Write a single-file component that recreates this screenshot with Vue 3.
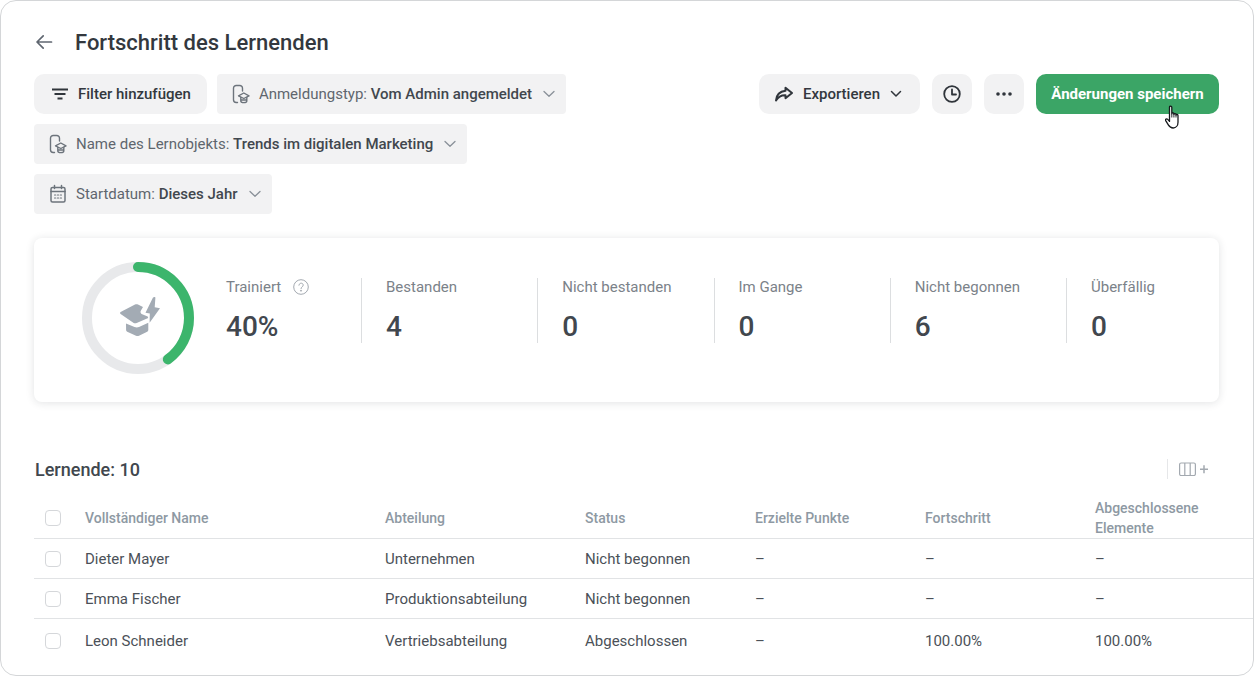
<template>
  <div class="page">
    <header class="title-row">
      <svg class="back" width="20" height="20" viewBox="0 0 20 20" fill="none" stroke="#5f6670" stroke-width="1.7" stroke-linecap="round" stroke-linejoin="round">
        <path d="M17.5 10H3.2M9.2 3.8 3 10l6.2 6.2" />
      </svg>
      <h1>Fortschritt des Lernenden</h1>
    </header>

    <section class="toolbar">
      <div class="filters">
        <button class="btn round">
          <svg width="16" height="12" viewBox="0 0 16 12" fill="none" stroke="#30353b" stroke-width="2">
            <path d="M0 1.5h16M2.5 6h11M5.5 10.5h5" />
          </svg>
          <span class="strong">Filter hinzufügen</span>
        </button>
        <button v-for="chip in chips" :key="chip.label" class="btn chip">
          <svg v-if="chip.icon === 'cap'" width="18" height="20" viewBox="0 0 18 20" fill="none" stroke="#6d747c" stroke-width="1.4" stroke-linecap="round" stroke-linejoin="round">
            <path d="M5.500 18.500H4.200A2.700 2.700 0 0 1 1.500 15.800V4.200A2.700 2.700 0 0 1 4.200 1.500h3.600a2.700 2.700 0 0 1 2.700 2.700V7" />
            <path d="M6.500 11.800 11.800 9l5.200 2.800-5.200 2.700z" />
            <path d="M8.800 13.500v3.400c0 1 1.300 1.700 3 1.700s3-.7 3-1.700v-3.400M8.800 16h6" />
          </svg>
          <svg v-else width="18" height="20" viewBox="0 0 18 20" fill="none" stroke="#6d747c" stroke-width="1.500" stroke-linecap="round">
            <rect x="2" y="3.500" width="14" height="14.500" rx="1.500" />
            <path d="M2 7.500h14M5.500 1.500v3M12.500 1.500v3" />
            <path d="M5.500 11h1.200M8.400 11h1.200M11.300 11h1.200M5.500 14h1.200M8.400 14h1.200M11.300 14h1.200" stroke-width="1.200" />
          </svg>
          <span class="chip-text">{{ chip.label }}: <b>{{ chip.value }}</b></span>
          <svg class="chev" width="12" height="8" viewBox="0 0 12 8" fill="none" stroke="#8a9199" stroke-width="1.300" stroke-linecap="round" stroke-linejoin="round">
            <path d="M1 1.500 6 6.300l5-4.800" />
          </svg>
        </button>
      </div>

      <div class="actions">
        <button class="btn round export">
          <svg width="18" height="16" viewBox="0 0 18 16" fill="none" stroke="#30353b" stroke-width="2" stroke-linejoin="round">
            <path d="M10.500 1.800 17 7l-6.500 5.200V9.200C6 9 3.300 10.600 1 14.500c.4-5.500 3.800-9 9.500-9.700z" />
          </svg>
          <span class="strong">Exportieren</span>
          <svg width="12" height="8" viewBox="0 0 12 8" fill="none" stroke="#30353b" stroke-width="1.500" stroke-linecap="round" stroke-linejoin="round">
            <path d="M1.500 1.500 6 6l4.500-4.500" />
          </svg>
        </button>
        <button class="btn round square">
          <svg width="18" height="18" viewBox="0 0 18 18" fill="none" stroke="#30353b" stroke-width="1.800" stroke-linecap="round" stroke-linejoin="round">
            <circle cx="9" cy="9" r="7.800" />
            <path d="M9 4.500V9.500H13" />
          </svg>
        </button>
        <button class="btn round square">
          <svg width="16" height="4" viewBox="0 0 16 4" fill="#30353b">
            <circle cx="2" cy="2" r="1.800" /><circle cx="8" cy="2" r="1.800" /><circle cx="14" cy="2" r="1.800" />
          </svg>
        </button>
        <button class="btn round save">
          Änderungen speichern
          <svg class="hand" width="18" height="25" viewBox="0 0 18 25" fill="#fff" stroke="#16191c" stroke-width="1.300" stroke-linejoin="round">
            <path d="M4.500 2.200c0-1.500 2.300-1.500 2.300 0v6.600c.1-1.200 2-1.200 2.100 0v.6c.1-1.100 2-1.100 2.100 0v.8c.2-1 2-.9 2 .2v6.800c0 3-1.800 5.800-4.800 5.800-2.400 0-3.600-.9-4.700-2.800L.7 15.600c-.7-1.300 1-2.300 2-1.200l1.800 2z" />
            <path d="M6.800 9v3.500M8.900 9.400v3.100M11 10.200v2.300" fill="none" stroke-width=".9" />
          </svg>
        </button>
      </div>
    </section>

    <section class="stats">
      <svg class="ring" width="112" height="112" viewBox="0 0 112 112" fill="none">
        <circle cx="56" cy="56" r="51" stroke="#e8e9eb" stroke-width="10" />
        <circle cx="56" cy="56" r="51" stroke="#3cb56c" stroke-width="10" stroke-linecap="round" :stroke-dasharray="ringDash" transform="rotate(-90 56 56)" />
        <path d="M38.600 50 53 42.500c1-.5 2-.5 3 0l5 2.500-2.200 3.700c-.8 1.400 0 3 1.400 3.500l5.500 2.300.5 1.500-11.500 5c-1 .4-2 .4-3 0L38.600 52c-.7-.4-.7-1.600 0-2z" fill="#a3abb4" />
        <path d="M44 61.500 52.500 65c1.500.6 3 .6 4.500 0l9.300-4.300v7.300c0 .8-.4 1.400-1.100 1.700l-8.200 4c-1 .5-2 .5-3 0l-8.800-4c-.7-.3-1.100-.9-1.100-1.700z" fill="#a3abb4" />
        <path d="M71 35.500 63.500 50.700l4.300.7-.2 9.300L78 46.300l-5.300-1 .7-9.500c0-.7-.4-1-.9-.8z" fill="#a3abb4" />
      </svg>

      <div class="stat first">
        <div class="stat-label">Trainiert
          <svg class="help" width="16" height="16" viewBox="0 0 16 16" fill="none" stroke="#a3a9b0" stroke-width="1">
            <circle cx="8" cy="8" r="7.300" />
            <path d="M5.900 6.200c.1-2.700 4.300-2.700 4.300-.1 0 1.800-2.200 1.700-2.200 3.500" stroke-linecap="round" />
            <circle cx="8" cy="11.700" r=".5" fill="#a3a9b0" />
          </svg>
        </div>
        <div class="stat-value">40%</div>
      </div>
      <div v-for="stat in stats" :key="stat.label" class="stat">
        <div class="stat-label">{{ stat.label }}</div>
        <div class="stat-value">{{ stat.value }}</div>
      </div>
    </section>

    <div class="table-title">
      <h2>Lernende: 10</h2>
      <div class="columns-btn">
        <svg width="30" height="14" viewBox="0 0 30 14" fill="none" stroke="#a3a9b0" stroke-width="1.200">
          <rect x=".6" y="1" width="15.800" height="12.500" rx="1.500" />
          <path d="M5.800 1v12.500M11.200 1v12.500" />
          <path d="M21 7.200h8M25 3.200v8" stroke-width="1.500" />
        </svg>
      </div>
    </div>

    <div class="table">
      <div class="row head">
        <span class="check"></span>
        <span v-for="col in columns" :key="col">{{ col }}</span>
      </div>
      <div v-for="row in rows" :key="row.name" class="row">
        <span class="check"></span>
        <span>{{ row.name }}</span>
        <span>{{ row.dept }}</span>
        <span>{{ row.status }}</span>
        <span>{{ row.points }}</span>
        <span>{{ row.progress }}</span>
        <span>{{ row.done }}</span>
      </div>
    </div>
  </div>
</template>

<script setup>
const chips = [
  { icon: "cap", label: "Anmeldungstyp", value: "Vom Admin angemeldet" },
  { icon: "cap", label: "Name des Lernobjekts", value: "Trends im digitalen Marketing" },
  { icon: "cal", label: "Startdatum", value: "Dieses Jahr" },
];

const stats = [
  { label: "Bestanden", value: 4 },
  { label: "Nicht bestanden", value: 0 },
  { label: "Im Gange", value: 0 },
  { label: "Nicht begonnen", value: 6 },
  { label: "Überfällig", value: 0 },
];

const columns = [
  "Vollständiger Name",
  "Abteilung",
  "Status",
  "Erzielte Punkte",
  "Fortschritt",
  "Abgeschlossene Elemente",
];

const rows = [
  { name: "Dieter Mayer", dept: "Unternehmen", status: "Nicht begonnen", points: "–", progress: "–", done: "–" },
  { name: "Emma Fischer", dept: "Produktionsabteilung", status: "Nicht begonnen", points: "–", progress: "–", done: "–" },
  { name: "Leon Schneider", dept: "Vertriebsabteilung", status: "Abgeschlossen", points: "–", progress: "100.00%", done: "100.00%" },
];

const circumference = 2 * Math.PI * 51;
const ringDash = `${circumference * 0.4} ${circumference * 0.6}`;
</script>

<style>
html,
body {
  margin: 0;
  background: #fff;
}
</style>

<style scoped>
.page {
  box-sizing: border-box;
  width: 1254px;
  height: 676px;
  padding: 27px 34px 0 33px;
  border: 1px solid #d4d6d8;
  border-radius: 16px;
  overflow: hidden;
  background: #fff;
  font-family: Roboto, "Liberation Sans", sans-serif;
  color: #41474e;
}

.title-row {
  display: flex;
  align-items: center;
  height: 28px;
}

.back {
  margin-right: 21px;
}

h1 {
  margin: 0;
  font-size: 22px;
  font-weight: 500;
  color: #33383e;
}

.toolbar {
  display: flex;
  justify-content: space-between;
  margin-top: 18px;
}

.filters {
  display: flex;
  flex-wrap: wrap;
  gap: 10px;
  width: 600px;
}

.actions {
  display: flex;
  gap: 12px;
}

.btn {
  display: flex;
  align-items: center;
  height: 40px;
  border: 0;
  background: #f2f2f3;
  font-family: inherit;
  font-size: 15px;
  color: #33383e;
  white-space: nowrap;
}

.round {
  border-radius: 10px;
  padding: 0 16px 0 18px;
  gap: 10px;
}

.strong {
  font-weight: 500;
}

.chip {
  border-radius: 4px;
  padding: 0 11px 0 15px;
}

.chip-text {
  margin-left: 9px;
  margin-right: 11px;
  color: #5f666e;
}

.chip-text b {
  font-weight: 500;
  color: #41474e;
}

.export {
  padding: 0 18px 0 16px;
}

.square {
  width: 40px;
  padding: 0;
  justify-content: center;
}

.save {
  position: relative;
  width: 183px;
  padding: 0;
  justify-content: center;
  background: #3ba566;
  color: #fff;
  font-weight: 700;
}

.hand {
  position: absolute;
  left: 129px;
  top: 31px;
}

.stats {
  display: flex;
  align-items: flex-start;
  box-sizing: border-box;
  height: 164px;
  margin-top: 24px;
  padding: 24px 0 0 48px;
  border-radius: 8px;
  background: #fff;
  box-shadow: 0 1px 8px rgba(30, 40, 50, 0.13);
}

.ring {
  flex: none;
}

.stat {
  flex: none;
  box-sizing: border-box;
  width: 176.250px;
  height: 65px;
  margin-top: 16px;
  padding-left: 24px;
  border-left: 1px solid #dcdee0;
}

.stat:last-child {
  width: 153px;
}

.stat.first {
  width: 135px;
  padding-left: 0;
  margin-left: 32px;
  border-left: 0;
}

.stat-label {
  display: flex;
  align-items: center;
  gap: 12px;
  height: 18px;
  font-size: 15px;
  color: #7b8289;
}

.stat-value {
  margin-top: 15px;
  font-size: 28px;
  line-height: 32px;
  font-weight: 500;
  color: #41474e;
}

.table-title {
  display: flex;
  align-items: center;
  justify-content: space-between;
  height: 24px;
  margin-top: 55px;
  margin-bottom: 17px;
  margin-left: 1px;
}

h2 {
  margin: 0;
  font-size: 18px;
  font-weight: 500;
  color: #41474e;
}

.columns-btn {
  display: flex;
  align-items: center;
  height: 20px;
  padding-left: 11px;
  margin-right: 10px;
  border-left: 1px solid #e6e7e9;
}

.table {
  margin-right: -34px;
}

.row {
  display: grid;
  grid-template-columns: 51px 300px 200px 170px 170px 170px 1fr;
  align-items: center;
  height: 40px;
  box-sizing: border-box;
  border-bottom: 1px solid #e1e3e5;
  font-size: 15px;
  color: #4b5158;
}

.row.head {
  height: 41px;
  font-weight: 500;
  font-size: 14px;
  line-height: 20px;
  color: #8e99a3;
}

.row.head span:last-child {
  width: 120px;
}

.row:last-child {
  height: 44px;
  border-bottom: 0;
}

.check {
  box-sizing: border-box;
  width: 16px;
  height: 16px;
  margin-left: 11px;
  border: 1px solid #d5d7da;
  border-radius: 4px;
  background: #fff;
}
</style>
